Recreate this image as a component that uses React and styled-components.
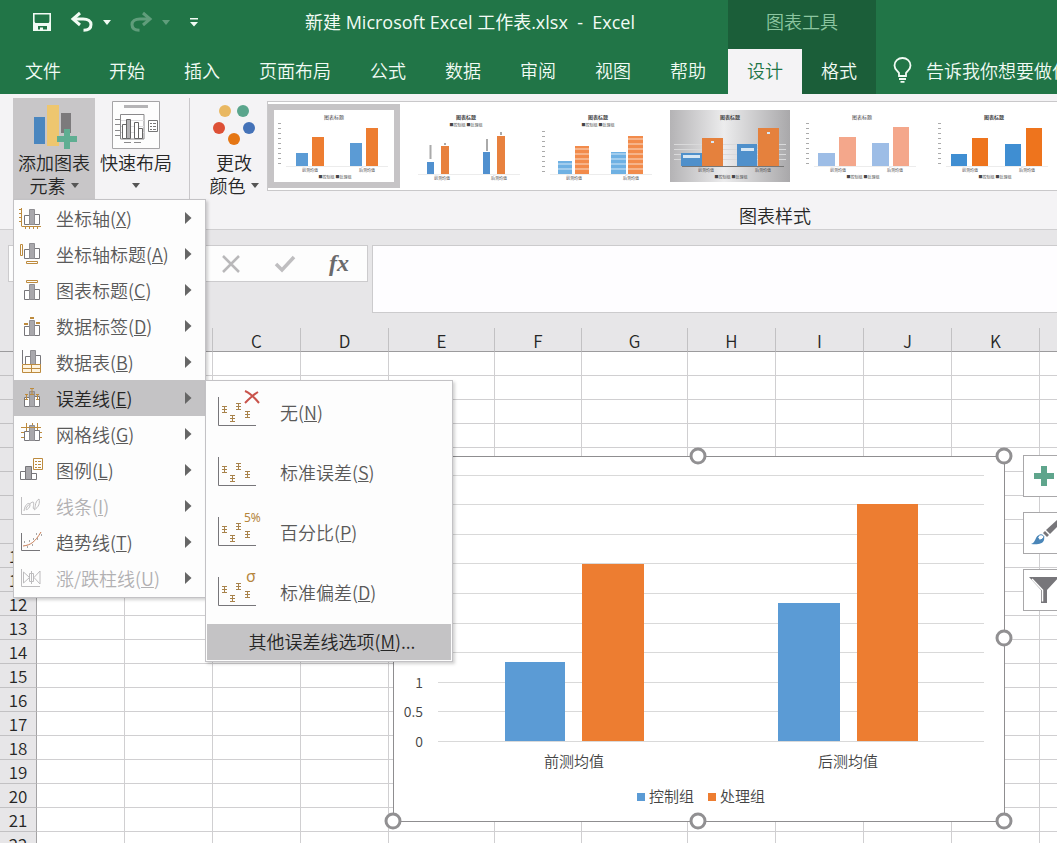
import React from 'react';
import styled, { createGlobalStyle, css } from 'styled-components';

const Global = createGlobalStyle`
  *, *::before, *::after { box-sizing: border-box; }
  html, body { margin: 0; }
  body, button, input {
    font-family: "Noto Sans CJK SC", "Open Sans", sans-serif;
    font-size: 18px;
    font-weight: 350;
  }
  button {
    margin: 0;
    padding: 0;
    border: 0;
    background: none;
    color: inherit;
    cursor: pointer;
  }
  svg { display: block; flex: none; overflow: visible; }
`;

const Window = styled.div`
  display: flex;
  flex-direction: column;
  height: 100vh;
  overflow: hidden;
  background: #fff;
  color: #262626;
`;

/* ---------- title bar and tabs ---------- */

const Header = styled.header`
  display: flex;
  flex: none;
  height: 94px;
  overflow: hidden;
  background: #217547;
  color: #f1fbf4;
`;

const HeaderColumn = styled.div`
  display: flex;
  flex: none;
  flex-direction: column;
  justify-content: space-between;
  padding-right: ${(p) => p.$end || 0}px;
  background: ${(p) => (p.$dark ? '#1b5e39' : 'none')};
`;

const TitleRow = styled.div`
  display: flex;
  align-items: center;
  height: 44px;
`;

const QuickAccess = styled.div`
  display: flex;
  align-items: center;
  gap: 19px;
  padding-left: 32px;
`;

const SplitButton = styled.div`
  display: flex;
  align-items: center;
  gap: 10px;
  opacity: ${(p) => (p.$off ? 0.3 : 1)};
`;

const DocumentTitle = styled.h1`
  flex: 1;
  margin: 0;
  padding-left: 16px;
  font-family: "Open Sans", "Noto Sans CJK SC", sans-serif;
  font-size: 18px;
  font-weight: 400;
  line-height: 26px;
  text-align: center;
  white-space: nowrap;
`;

const ContextTitle = styled.div`
  display: flex;
  align-items: center;
  justify-content: center;
  height: 44px;
  padding-bottom: 2px;
  color: #8cc6a0;
`;

const TabRow = styled.nav`
  display: flex;
  gap: ${(p) => p.$gap || 0}px;
  height: 45px;
`;

const Tab = styled.button`
  height: 45px;
  padding: 0 19px 4px;
  white-space: nowrap;
  ${(p) => p.$first && css`padding: 0 28px 4px 25px;`}
  ${(p) => p.$active && css`background: #f4f3f5; color: #217547;`}
`;

const TellMe = styled.button`
  display: flex;
  flex: 1;
  align-items: center;
  align-self: flex-end;
  gap: 14px;
  height: 45px;
  padding: 0 0 4px 17px;
  white-space: nowrap;
`;

/* ---------- ribbon ---------- */

const Ribbon = styled.section`
  position: relative;
  z-index: 5;
  display: flex;
  flex: none;
  height: 136px;
  padding: 4px 0 0 13px;
  border-bottom: 1px solid #cfced0;
  background: #f4f3f5;
`;

const MenuAnchor = styled.div`
  position: relative;
  flex: none;
`;

const BigButton = styled.button`
  display: flex;
  flex: none;
  flex-direction: column;
  align-items: center;
  gap: 2px;
  width: ${(p) => (p.$narrow ? 62 : 82)}px;
  height: 101px;
  padding-top: 3px;
  line-height: 23px;
  white-space: nowrap;
  background: ${(p) => (p.$pressed ? '#c8c6c8' : 'none')};
`;

const BigLabel = styled.span`
  display: flex;
  flex-direction: column;
  align-items: center;
`;

const LabelLine = styled.span`
  display: flex;
  align-items: center;
  gap: 5px;
  height: 23px;
`;

const Divider = styled.div`
  flex: none;
  width: 1px;
  height: 101px;
  margin: 0 13px 0 12px;
  background: #c9c7ca;
`;

const GalleryGroup = styled.div`
  flex: 1;
  min-width: 0;
  margin: 3px 0 0 2px;
`;

const Gallery = styled.div`
  display: flex;
  align-items: center;
  height: 90px;
  overflow: hidden;
  border: 1px solid #c9c8ca;
  border-right: 0;
  background: #fff;
`;

const StyleButton = styled.button`
  flex: none;
  width: 132px;
  padding: 6px;
  background: ${(p) => (p.$active ? '#c6c4c6' : 'none')};
`;

const GroupLabel = styled.div`
  padding: 11px 0 0 226px;
  line-height: 26px;
  text-align: center;
`;

/* ---------- menus ---------- */

const Popup = styled.div`
  position: absolute;
  z-index: 10;
  border: 1px solid #c3c2c5;
  background: #fdfdfd;
  box-shadow: 2px 2px 3px rgba(0, 0, 0, 0.18);
`;

const Menu = styled(Popup)`
  top: 101px;
  left: 0;
  width: 193px;
  padding-bottom: 1px;
`;

const SubMenu = styled(Popup)`
  top: 0;
  left: 191px;
  width: 248px;
  padding: 1px;
`;

const MenuEntry = styled.div`
  position: relative;
`;

const MenuItem = styled.button`
  display: flex;
  align-items: center;
  gap: 13px;
  width: 100%;
  height: 36px;
  padding: 0 13px 0 5px;
  text-align: left;
  white-space: nowrap;
  color: ${(p) => (p.$off ? '#b1b0b2' : p.$active ? '#262626' : '#5a5a5a')};
  background: ${(p) => (p.$active ? '#c4c3c5' : 'none')};
`;

const ItemText = styled.span`
  flex: 1;
  padding-bottom: 1px;
`;

const SubItem = styled(MenuItem)`
  gap: 16px;
  height: 60px;
  padding: 0 11px;
`;

const SubFooter = styled(MenuItem)`
  justify-content: center;
  height: 36px;
  margin-top: 2px;
  padding: 0 0 2px 6px;
`;

/* ---------- formula bar ---------- */

const FormulaBar = styled.section`
  display: flex;
  flex: none;
  gap: 4px;
  height: 98px;
  padding: 15px 0 0 8px;
  background: #e7e6e8;
`;

const NameBox = styled.input`
  flex: none;
  width: 182px;
  height: 37px;
  border: 1px solid #cccbcd;
  background: #fdfdfd;
`;

const FormulaTools = styled.div`
  display: flex;
  flex: none;
  align-items: center;
  justify-content: space-between;
  width: 174px;
  height: 37px;
  padding: 0 18px 0 27px;
  border: 1px solid #cccbcd;
  background: #fdfdfd;
`;

const FxButton = styled.button`
  padding-bottom: 2px;
  font: italic bold 24px/32px "Liberation Serif", serif;
  color: #6a6a6c;
`;

const FormulaInput = styled.input`
  flex: 1;
  min-width: 0;
  height: 68px;
  border: 1px solid #cccbcd;
  border-right: 0;
  background: #fefdff;
`;

/* ---------- worksheet ---------- */

const Sheet = styled.main`
  position: relative;
  flex: 1;
  min-height: 0;
  overflow: hidden;
`;

const Grid = styled.table`
  width: 1128px;
  border-collapse: separate;
  border-spacing: 0;
  table-layout: fixed;
`;

const ColumnHead = styled.th`
  width: ${(p) => p.$width}px;
  height: 24px;
  padding: 2px 0 0;
  border-right: 1px solid #c2c1c3;
  border-bottom: 1px solid #9c9b9d;
  background: #e7e6e8;
  font-size: 17px;
  font-weight: 350;
  line-height: 20px;
`;

const RowHead = styled.th`
  height: 24px;
  padding: 2px 0 1px;
  border-right: 1px solid #a3a2a4;
  border-bottom: 1px solid #c2c1c3;
  background: #e7e6e8;
  font-size: 17px;
  font-weight: 350;
  line-height: 20px;
`;

const Cell = styled.td`
  height: 24px;
  padding: 0;
  border-right: 1px solid #d0cfd1;
  border-bottom: 1px solid #d0cfd1;
`;

const ChartObject = styled.div`
  position: absolute;
  top: 120px;
  left: 385px;
`;

const ChartActions = styled.div`
  position: absolute;
  top: 127px;
  left: 1023px;
  display: flex;
  flex-direction: column;
  gap: 15px;
`;

const ActionButton = styled.button`
  display: flex;
  align-items: center;
  justify-content: center;
  width: 42px;
  height: 42px;
  border: 1px solid #a9a8aa;
  background: #fff;
`;

/* ---------- small drawings ---------- */

const Caret = ({ fill = '#555' }) => (
  <svg width="8" height="5" viewBox="0 0 8 5"><path d="M0 0h8L4 5z" fill={fill} /></svg>
);

const SubArrow = () => (
  <svg width="7" height="14" viewBox="0 0 7 14"><path d="M0 1v12l6.500-6z" fill="#666" /></svg>
);

const SaveIcon = () => (
  <svg width="20" height="20" viewBox="0 0 20 20">
    <path d="M1.800 1.800h16.400v16.400H1.800z" fill="none" stroke="#f1fbf4" strokeWidth="1.600" />
    <path d="M2 11h16v8h-3v-5H6v5H2zM8 15.500h3V19H8z" fill="#f1fbf4" />
    <path d="M2 9.500l1.500 1.500H2zM18 9.500l-1.500 1.500H18z" fill="#f1fbf4" />
  </svg>
);

const UndoIcon = ({ flip }) => (
  <svg width="22" height="20" viewBox="0 0 22 20">
    <g transform={flip ? 'translate(22 0) scale(-1 1)' : undefined} fill="none" stroke="#f1fbf4" strokeWidth="3">
      <path d="M9 1 2 7l7 6" />
      <path d="M2.500 7H12c5 0 8 2.200 8 5.600 0 3.800-3 5.700-7.500 5.700" />
    </g>
  </svg>
);

const CustomizeIcon = () => (
  <svg width="10" height="9" viewBox="0 0 10 9">
    <path d="M1 0h8v1.500H1zM1 4h8L5 8.500z" fill="#f1fbf4" />
  </svg>
);

const BulbIcon = () => (
  <svg width="19" height="26" viewBox="0 0 19 26" fill="none" stroke="#f1fbf4" strokeWidth="1.800">
    <path d="M6 19v-3C4.500 13.500 1.500 12.500 1.500 8.500a8 7.500 0 0 1 16 0c0 4-3 5-4.500 7.500v3z" />
    <path d="M6 22h7M7.500 24.800h4" />
  </svg>
);

const AddElementIcon = () => (
  <svg width="48" height="48" viewBox="0 0 48 48">
    <path d="M4 16h11v27H4z" fill="#4a86bf" />
    <path d="M17 4h12v41H17z" fill="#eec66f" />
    <path d="M31 12h10v20H31z" fill="#7c7a7c" />
    <path d="M34 28h6v7h7v6h-7v7h-6v-7h-7v-6h7z" fill="#5fae92" />
  </svg>
);

const QuickLayoutIcon = () => (
  <svg width="48" height="48" viewBox="0 0 48 48">
    <path d="M.5.5h47v47H.5z" fill="#fdfdfd" stroke="#a5a4a6" />
    <path d="M12 4h24v3H12z" fill="#b5b4b6" />
    <path d="M8.500 38V13.500H32V38z" fill="#fff" stroke="#8a898b" />
    <path d="M9 19.500h23M9 25.500h23M9 31.500h23" stroke="#dfdee0" />
    <path d="M3 18.500h5M3 23.500h5M3 29.500h5M3 34.500h5M12 41.500h7M22 41.500h7" stroke="#8a898b" />
    <path d="M10.500 23.500h4v14h-4zM22.500 21.500h4v16h-4zM26.500 27.500h4v10h-4z" fill="#fff" stroke="#666" />
    <path d="M14.500 18.500h4v19h-4z" fill="#b4b3b5" stroke="#666" />
    <path d="M36.500 19.500h9v11h-9z" fill="#fff" stroke="#777" />
    <path d="M38 22.500h2m1 0h3m-6 3h2m1 0h3m-6 3h2m1 0h3" stroke="#777" />
  </svg>
);

const ColorsIcon = () => (
  <svg width="44" height="48" viewBox="0 0 44 48">
    <circle cx="13" cy="10" r="6" fill="#e9b862" />
    <circle cx="31" cy="10" r="6" fill="#5aa58c" />
    <circle cx="7" cy="27" r="6" fill="#dd5036" />
    <circle cx="37" cy="27" r="6" fill="#4472b8" />
    <circle cx="22" cy="38" r="6" fill="#e57614" />
  </svg>
);

const GREY = '#77767a';
const GOLD = '#bd8b3e';

const MiniBars = ({ x = 0, y = 0 }) => (
  <g transform={`translate(${x} ${y})`} stroke={GREY}>
    <path d="M.5 6.500h5v9h-5zM10.500 5.500h5v10h-5z" fill="#fff" />
    <path d="M5.500.5h5v15h-5z" fill="#a9a8ac" stroke="#8f8e92" />
  </g>
);

const menuIcons = {
  axes: (
    <>
      <MiniBars x={5} y={3} />
      <path d="M2.500 2v18.500M0 3.500h2M0 7.500h2M0 11.500h2M0 15.500h2M3 20.500h19M6.500 20v3M10.500 20v3M14.500 20v3M18.500 20v3" stroke={GOLD} />
    </>
  ),
  axisTitle: (
    <>
      <MiniBars x={5} y={1} />
      <path d="M1.500 2.500h2v11h-2zM7.500 19.500h11v2h-11z" stroke={GOLD} />
    </>
  ),
  chartTitle: (
    <>
      <MiniBars x={5} y={6} />
      <path d="M7.500 2.500h11v2h-11z" stroke={GOLD} />
    </>
  ),
  dataLabels: (
    <>
      <MiniBars x={5} y={6} />
      <path d="M5 10h4M11 4h4M17 9h4" stroke={GOLD} strokeWidth="2" />
    </>
  ),
  dataTable: (
    <>
      <path d="M3.500 0v14" stroke={GREY} />
      <MiniBars x={6} y={0} />
      <path d="M3.500 14.500h18v8h-18zM3.500 18.500h18M12.500 14.500v8" stroke={GOLD} fill="#fff4df" />
    </>
  ),
  errorBars: (
    <>
      <MiniBars x={5} y={5} />
      <path d="M7.500 8v6M6 8.500h3M6 13.500h3M13 2v6M11 2.500h4M11 8.500h4M18.500 8v6M17 8.500h3M17 13.500h3" stroke={GOLD} />
    </>
  ),
  gridlines: (
    <>
      <MiniBars x={5} y={3} />
      <path d="M2 5.500h20M2 10.500h3M2 15.500h3M7.500 1v8M13.500 1v2M18.500 1v7M21 10.500h2M21 15.500h2" stroke={GOLD} />
    </>
  ),
  legend: (
    <>
      <path d="M1.500 13.500h5v8h-5zM12.500 15.500h5v6h-5z" stroke={GREY} fill="#fff" />
      <path d="M6.500 8.500h6v13h-6z" stroke={GREY} fill="#a9a8ac" />
      <path d="M14.500.5h9v11h-9z" stroke={GOLD} fill="#fff" />
      <path d="M16 3.500h2m1 0h3m-6 3h2m1 0h3m-6 3h2m1 0h3" stroke={GOLD} />
    </>
  ),
  lines: (
    <path d="M2.500 3v17.500H21M5 17c1-8 6-9 6-6s-4 6-4 4 5-7 7-7-1 7 1 7 0-7 5-10c1 4 0 8-5 11" stroke="#bdbcbe" />
  ),
  trendline: (
    <>
      <path d="M2.500 3v17.500H21" stroke={GREY} />
      <path d="M4 16c8-1 12-4 18-14" stroke="#c57b54" />
      <path d="M5 12h1M8 17h1M10 11h1M13 15h1M14 9h1M18 9h1M17 4h1M22 5h1" stroke="#555" />
    </>
  ),
  upDown: (
    <>
      <path d="M2.500 3v17.500H21M4.500 6v11l6-5.500zM21 5v13l-6-6.500z" stroke="#bdbcbe" />
      <path d="M10.500 7.500h4v8h-4zM12.500 5v13" stroke="#bdbcbe" />
    </>
  ),
};

const MenuIcon = ({ name }) => (
  <svg width="24" height="24" viewBox="0 0 24 24" fill="none">{menuIcons[name]}</svg>
);

const errorMark = (x, y) => `M${x} ${y}h5m-5 3h5m-5 3h5m-2.500-6v6`;

const ErrorIcon = ({ badge }) => (
  <svg width="46" height="40" viewBox="0 0 46 40" fill="none">
    <path d="M.5 5v28.500H38" stroke="#77767a" />
    <path
      d={`${errorMark(4, 14.5)}${errorMark(12, 23.5)}${errorMark(18, 11.5)}${errorMark(27, 19.5)}`}
      stroke="#a8824a"
    />
    {badge === 'x' && <path d="M27-1c5 2 9 6 14 12M40 0c-5 3-9 7-13 11" stroke="#c9544c" strokeWidth="2" />}
    {badge && badge !== 'x' && (
      <text x={badge === 'σ' ? 28 : 26} y="10" fill="#b5853c" fontFamily="Noto Sans" fontWeight="400" fontSize={badge === 'σ' ? 16 : 12}>
        {badge}
      </text>
    )}
  </svg>
);

/* ---------- chart style thumbnails ---------- */

const thumbs = [
  { id: 1, bars: [[22, 12, 13], [38, 12, 29], [76, 12, 23], [92, 12, 38]], colors: ['#5b9bd5', '#ed7d31'], axis: true },
  { id: 2, bars: [[21, 7, 12], [35, 8, 28], [77, 7, 22], [91, 8, 38]], colors: ['#5090cf', '#e8813e'], top: true, lines: true },
  { id: 3, bars: [[20, 14, 13], [37, 14, 28], [73, 15, 22], [90, 15, 38]], colors: ['#6fb1e3', '#f28b4b'], axis: true, top: true, stripes: true },
  { id: 4, bars: [[11, 21, 13], [32, 21, 28], [67, 20, 22], [88, 21, 38]], colors: ['#4f90cb', '#e5813d'], grey: true },
  { id: 5, bars: [[16, 17, 13], [37, 17, 29], [70, 17, 23], [91, 16, 39]], colors: ['#9dbde6', '#f4a78b'], axis: true },
  { id: 6, bars: [[17, 16, 12], [38, 16, 28], [71, 16, 22], [92, 16, 38]], colors: ['#3f8ed2', '#ee741d'], axis: true },
];

const Thumb = ({ bars, colors, axis, top, stripes, grey, lines, id }) => {
  const base = top ? 64 : 56;
  return (
    <svg width="120" height="72" viewBox="0 0 120 72" fontFamily="Noto Sans CJK SC" fill="#444">
      <defs>
        <linearGradient id={`shade${id}`} x1="0" y1="0" x2="1" y2="0">
          <stop offset="0" stopColor="#b4b3b5" />
          <stop offset=".45" stopColor="#ececed" />
          <stop offset="1" stopColor="#a9a8aa" />
        </linearGradient>
      </defs>
      <rect width="120" height="72" fill={grey ? `url(#shade${id})` : '#fff'} />
      {grey && <path d="M4 34.500h112M4 39.500h112M4 44.500h112M4 49.500h112" stroke="#d9d9da" />}
      <text x="60" y="9" fontSize="5" textAnchor="middle" fontWeight={id === 1 || id === 5 ? 400 : 700}>图表标题</text>
      {top && <text x="60" y="17" fontSize="4" textAnchor="middle">■控制组 ■处理组</text>}
      {axis && <path d={`M5.500 ${base - 43}v44`} stroke="#aaa" strokeWidth="3" strokeDasharray="1 4" />}
      {bars.map(([x, w, h], i) => (
        <rect key={x} x={x} y={base - h} width={w} height={h} fill={colors[i % 2]} />
      ))}
      {stripes && <path d={`M18 ${base - 35}h90m-90 5h90m-90 5h90m-90 5h90m-90 5h90m-90 5h90m-90 5h90`} stroke="#fff" strokeOpacity=".7" />}
      {lines && <path d="M24.500 49V35M81 41V29M39 35v-2M95 25v-3" stroke="#aaa" strokeWidth="2" />}
      {grey && <path d="M13 45h17v3H13zM71 38h13v3H71zM41 31h3v2h-3zM97 22h3v2h-3z" fill="#d7e7f4" />}
      <path d={`M12 ${base + 0.5}h102`} stroke={grey ? '#777' : '#ececec'} />
      <text x="36" y={base + 6} fontSize="4" textAnchor="middle">前测均值</text>
      <text x="93" y={base + 6} fontSize="4" textAnchor="middle">后测均值</text>
      {!top && <text x="61" y="69" fontSize="4" textAnchor="middle">■控制组 ■处理组</text>}
    </svg>
  );
};

/* ---------- main chart ---------- */

const axisTicks = ['0', '0.5', '1', '1.5', '2', '2.5', '3', '3.5', '4', '4.5'];
const tickY = (i) => Math.round(293 - i * 29.6) + 0.5;
const series = [
  { x: 120, w: 60, top: 214, fill: '#5b9bd5' },
  { x: 197, w: 62, top: 116, fill: '#ed7d31' },
  { x: 393, w: 62, top: 155, fill: '#5b9bd5' },
  { x: 472, w: 61, top: 56, fill: '#ed7d31' },
];
const handles = [[8, 8], [313, 8], [619, 8], [8, 190], [619, 190], [8, 373], [313, 373], [619, 373]];

const Chart = () => (
  <svg width="628" height="382" viewBox="0 0 628 382" fontFamily="Noto Sans CJK SC" fontSize="15" fontWeight="350" fill="#444">
    <rect x="8.500" y="8.500" width="611" height="365" fill="#fff" stroke="#8f8e90" />
    {axisTicks.map((t, i) => (
      <g key={t}>
        <path d={`M53 ${tickY(i)}H599`} stroke="#d9d9d9" />
        <text x="38" y={tickY(i) + 5} fontSize="14" textAnchor="end">{t}</text>
      </g>
    ))}
    {series.map((s) => (
      <rect key={s.x} x={s.x} y={s.top} width={s.w} height={293 - s.top} fill={s.fill} />
    ))}
    <text x="189" y="319" textAnchor="middle">前测均值</text>
    <text x="463" y="319" textAnchor="middle">后测均值</text>
    <rect x="252" y="345" width="8" height="8" fill="#5b9bd5" />
    <text x="264" y="354">控制组</text>
    <rect x="323" y="345" width="8" height="8" fill="#ed7d31" />
    <text x="335" y="354">处理组</text>
    {handles.map(([x, y]) => (
      <circle key={`${x}-${y}`} cx={x} cy={y} r="7" fill="#fff" stroke="#919092" strokeWidth="3" />
    ))}
  </svg>
);

/* ---------- data ---------- */

const tabs = ['文件', '开始', '插入', '页面布局', '公式', '数据', '审阅', '视图', '帮助'];

const menu = [
  { icon: 'axes', text: '坐标轴', k: 'X' },
  { icon: 'axisTitle', text: '坐标轴标题', k: 'A' },
  { icon: 'chartTitle', text: '图表标题', k: 'C' },
  { icon: 'dataLabels', text: '数据标签', k: 'D' },
  { icon: 'dataTable', text: '数据表', k: 'B' },
  { icon: 'errorBars', text: '误差线', k: 'E', open: true },
  { icon: 'gridlines', text: '网格线', k: 'G' },
  { icon: 'legend', text: '图例', k: 'L' },
  { icon: 'lines', text: '线条', k: 'I', off: true },
  { icon: 'trendline', text: '趋势线', k: 'T' },
  { icon: 'upDown', text: '涨/跌柱线', k: 'U', off: true },
];

const subMenu = [
  { text: '无', k: 'N', badge: 'x' },
  { text: '标准误差', k: 'S' },
  { text: '百分比', k: 'P', badge: '5%' },
  { text: '标准偏差', k: 'D', badge: 'σ' },
];

const columns = [
  ['A', 88], ['B', 88], ['C', 88], ['D', 88], ['E', 106], ['F', 87],
  ['G', 106], ['H', 88], ['I', 88], ['J', 88], ['K', 88], ['L', 88],
];
const rows = Array.from({ length: 21 }, (_, i) => i + 2);

const Key = ({ text, k, tail = '' }) => <>{text}(<u>{k}</u>){tail}</>;

export default function App() {
  return (
    <Window>
      <Global />
      <Header>
        <HeaderColumn $end={3}>
          <TitleRow>
            <QuickAccess>
              <button aria-label="保存"><SaveIcon /></button>
              <SplitButton>
                <button aria-label="撤消"><UndoIcon /></button>
                <button aria-label="撤消列表"><Caret fill="#f1fbf4" /></button>
              </SplitButton>
              <SplitButton $off>
                <button aria-label="恢复"><UndoIcon flip /></button>
                <button aria-label="恢复列表"><Caret fill="#f1fbf4" /></button>
              </SplitButton>
              <button aria-label="自定义快速访问工具栏"><CustomizeIcon /></button>
            </QuickAccess>
            <DocumentTitle>新建 Microsoft Excel 工作表.xlsx&nbsp; -&nbsp; Excel</DocumentTitle>
          </TitleRow>
          <TabRow $gap={1}>
            {tabs.map((t, i) => <Tab key={t} $first={i === 0}>{t}</Tab>)}
          </TabRow>
        </HeaderColumn>
        <HeaderColumn $dark>
          <ContextTitle>图表工具</ContextTitle>
          <TabRow>
            <Tab $active>设计</Tab>
            <Tab>格式</Tab>
          </TabRow>
        </HeaderColumn>
        <TellMe><BulbIcon />告诉我你想要做什么</TellMe>
      </Header>

      <Ribbon>
        <MenuAnchor>
          <BigButton $pressed aria-haspopup="menu" aria-expanded="true">
            <AddElementIcon />
            <BigLabel>
              <LabelLine>添加图表</LabelLine>
              <LabelLine>元素 <Caret /></LabelLine>
            </BigLabel>
          </BigButton>
          <Menu role="menu">
            {menu.map((m) => (
              <MenuEntry key={m.icon}>
                <MenuItem role="menuitem" $off={m.off} $active={m.open}>
                  <MenuIcon name={m.icon} />
                  <ItemText><Key text={m.text} k={m.k} /></ItemText>
                  <SubArrow />
                </MenuItem>
                {m.open && (
                  <SubMenu role="menu">
                    {subMenu.map((s) => (
                      <SubItem key={s.text} role="menuitem">
                        <ErrorIcon badge={s.badge} />
                        <ItemText><Key text={s.text} k={s.k} /></ItemText>
                      </SubItem>
                    ))}
                    <SubFooter role="menuitem" $active>
                      <span><Key text="其他误差线选项" k="M" tail="..." /></span>
                    </SubFooter>
                  </SubMenu>
                )}
              </MenuEntry>
            ))}
          </Menu>
        </MenuAnchor>
        <BigButton>
          <QuickLayoutIcon />
          <BigLabel>
            <LabelLine>快速布局</LabelLine>
            <LabelLine><Caret /></LabelLine>
          </BigLabel>
        </BigButton>
        <Divider />
        <BigButton $narrow>
          <ColorsIcon />
          <BigLabel>
            <LabelLine>更改</LabelLine>
            <LabelLine>颜色 <Caret /></LabelLine>
          </BigLabel>
        </BigButton>
        <GalleryGroup>
          <Gallery>
            {thumbs.map((t) => (
              <StyleButton key={t.id} $active={t.id === 1} aria-label={`样式 ${t.id}`}>
                <Thumb {...t} />
              </StyleButton>
            ))}
          </Gallery>
          <GroupLabel>图表样式</GroupLabel>
        </GalleryGroup>
      </Ribbon>

      <FormulaBar>
        <NameBox aria-label="名称框" />
        <FormulaTools>
          <button aria-label="取消">
            <svg width="18" height="18" viewBox="0 0 18 18"><path d="M1 1l16 16M17 1 1 17" stroke="#b9b8ba" strokeWidth="2.500" /></svg>
          </button>
          <button aria-label="输入">
            <svg width="20" height="16" viewBox="0 0 20 16"><path d="M1 8l6 6L19 1" fill="none" stroke="#bfbec0" strokeWidth="3.500" /></svg>
          </button>
          <FxButton>fx</FxButton>
        </FormulaTools>
        <FormulaInput aria-label="编辑栏" />
      </FormulaBar>

      <Sheet>
        <Grid>
          <thead>
            <tr>
              <ColumnHead $width={37} />
              {columns.map(([c, w]) => <ColumnHead key={c} $width={w}>{c}</ColumnHead>)}
            </tr>
          </thead>
          <tbody>
            {rows.map((r) => (
              <tr key={r}>
                <RowHead>{r}</RowHead>
                {columns.map(([c]) => <Cell key={c} />)}
              </tr>
            ))}
          </tbody>
        </Grid>
        <ChartObject><Chart /></ChartObject>
        <ChartActions>
          <ActionButton aria-label="图表元素">
            <svg width="20" height="20" viewBox="0 0 20 20"><path d="M7 0h6v7h7v6h-7v7H7v-7H0V7h7z" fill="#5fa58c" /></svg>
          </ActionButton>
          <ActionButton aria-label="图表样式">
            <svg width="28" height="28" viewBox="0 0 28 28">
              <path d="M28 0v7l-8 8-4-4z" fill="#77767a" />
              <path d="M15 12l4 4-2 2-4-4z" fill="#77767a" />
              <path d="M1 25c5-1 4-9 9-9 3 0 5 2 4 5-1 4-7 5-13 4z" fill="#4a86b8" />
              <path d="M8 18c1-3 5-3 6 0-1 2-3 3-4 3" fill="#fff" stroke="#4a86b8" />
            </svg>
          </ActionButton>
          <ActionButton aria-label="图表筛选器">
            <svg width="30" height="28" viewBox="0 0 30 28">
              <path d="M0 1h30L18 14v13h-6V14z" fill="#77767a" />
              <path d="M3 3l10.500 11v11.500" fill="none" stroke="#fff" strokeWidth="1.500" />
            </svg>
          </ActionButton>
        </ChartActions>
      </Sheet>
    </Window>
  );
}
